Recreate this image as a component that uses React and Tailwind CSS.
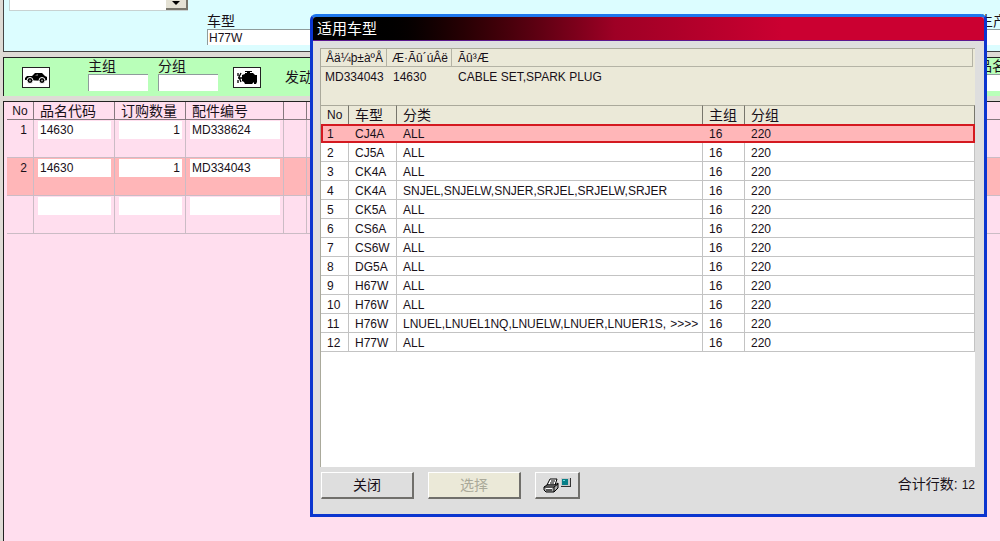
import React from 'react'

const orders = [
  { no: 1, code: '14630', qty: '1', part: 'MD338624' },
  { no: 2, code: '14630', qty: '1', part: 'MD334043', active: true },
  { no: '', code: '', qty: '', part: '' },
]

const models = [
  ['CJ4A', 'ALL'],
  ['CJ5A', 'ALL'],
  ['CK4A', 'ALL'],
  ['CK4A', 'SNJEL,SNJELW,SNJER,SRJEL,SRJELW,SRJER'],
  ['CK5A', 'ALL'],
  ['CS6A', 'ALL'],
  ['CS6W', 'ALL'],
  ['DG5A', 'ALL'],
  ['H67W', 'ALL'],
  ['H76W', 'ALL'],
  ['H76W', 'LNUEL,LNUEL1NQ,LNUELW,LNUER,LNUER1S,', '>>>>'],
  ['H77W', 'ALL'],
]

function CarIcon() {
  return (
    <svg className="w-6 h-3 shrink-0" viewBox="0 0 24 12" aria-hidden="true">
      <path d="M1 6 L3 4 L8 4 L11 1 L18 1 L21 4 L23 5 L23 8 L21 9 L1 8 Z" fill="#000" />
      <path d="M11 4 L13 2 L14 2 L14 4 Z" fill="#555" />
      <circle cx="6" cy="8.500" r="3" fill="#000" stroke="#fff" />
      <circle cx="18" cy="8.500" r="3" fill="#000" stroke="#fff" />
      <circle cx="6" cy="8.500" r="1" fill="#999" />
      <circle cx="18" cy="8.500" r="1" fill="#999" />
    </svg>
  )
}

function EngineIcon() {
  return (
    <svg className="w-5 h-4 shrink-0" viewBox="0 0 20 16" aria-hidden="true">
      <path d="M5 5 L8 4 L8 3 L10 3 L10 2 L8 2 L8 1 L15 1 L15 2 L13 2 L13 3 L16 3 L18 5 L20 5 L20 12 L19 14 L17 14 L17 12 L15 14 L8 14 L7 12 L5 11 Z" fill="#000" />
      <path d="M1 3 V6 M1 10 V13 M4 3 L2 7 L4 12 M1 8 H5" stroke="#000" strokeWidth="1.300" fill="none" />
    </svg>
  )
}

function PrinterIcon() {
  return (
    <svg className="w-7 h-4 shrink-0" viewBox="0 0 28 16" aria-hidden="true">
      <path d="M4 8 L7 2 L14 2 L12 8 Z" fill="#fff" stroke="#000" />
      <path d="M8 4 H12 M7 6 H11" stroke="#000" />
      <path d="M1 10 L4 8 L12 8 L15 6 L15 11 L11 15 L3 15 L1 13 Z" fill="#aaa" stroke="#000" />
      <path d="M1 10 H11 L15 7 M11 10 V15 M3 13 H9" stroke="#000" fill="none" />
      <path d="M3 11.500 H9" stroke="#fff" />
      <path d="M18 1 H28 V10 H18 Z" fill="#333" />
      <path d="M18 1 H27 V9 H18 Z" fill="#c8c8c8" />
      <path d="M19 2 H25 V8 H19 Z" fill="#087f88" />
      <path d="M20 3 H22 V4 H20 Z" fill="#6dd" />
    </svg>
  )
}

function Field({ label, id, value = '', className = '', inputClass }) {
  return (
    <div className={`flex flex-col ${className}`}>
      <label htmlFor={id} className="text-sm leading-4 whitespace-nowrap">{label}</label>
      <input
        id={id}
        defaultValue={value}
        className={`w-full min-w-0 bg-white border-t border-l border-[#8f9b9b] text-xs px-px ${inputClass}`}
      />
    </div>
  )
}

function SearchPanel() {
  return (
    <section className="h-[52px] shrink-0 bg-[#dcfdff] border-l border-b border-[#444] overflow-hidden">
      <div className="flex h-[13px] pl-[5px]">
        <div className="flex w-[179px] h-[11px] bg-white border-l border-b border-[#c8d2d2]">
          <input aria-label="目录" className="flex-1 min-w-0 h-[10px]" />
          <button aria-label="展开" className="w-[22px] bg-[#e4e1d4] border-r-2 border-b-2 border-[#77756b] flex justify-center">
            <svg className="w-2 h-1 mt-px" viewBox="0 0 8 4" aria-hidden="true"><path d="M0 0 H8 L4 4 Z" fill="#000" /></svg>
          </button>
        </div>
      </div>
      <div className="grid grid-cols-[155px_215px_132px_135px_135px_1fr] pl-[203px]">
        <Field id="model" label="车型" value="H77W" inputClass="h-4" />
        <Field id="kind" label="分类" inputClass="h-4" />
        <Field id="outer" label="外饰" inputClass="h-4" />
        <Field id="inner" label="内饰" inputClass="h-4" />
        <Field id="option" label="选装" inputClass="h-4" />
        <Field id="made" label="生产日期" className="overflow-hidden" inputClass="h-4" />
      </div>
    </section>
  )
}

function GroupPanel() {
  return (
    <section className="h-[39px] shrink-0 mt-[5px] bg-[#b9ffb9] border-t border-l border-[#222] flex overflow-hidden">
      <button aria-label="车型图" className="ml-[18px] mt-[9px] w-7 h-[21px] bg-white border border-[#222] flex items-center justify-center">
        <CarIcon />
      </button>
      <Field id="main" label="主组" className="ml-[38px] w-[60px]" inputClass="h-[17px]" />
      <Field id="sub" label="分组" className="ml-[10px] w-[60px]" inputClass="h-[17px]" />
      <button aria-label="发动机图" className="ml-[15px] mt-[9px] w-7 h-[21px] bg-white border border-[#222] flex items-center justify-center">
        <EngineIcon />
      </button>
      <span className="ml-6 mt-[9px] text-sm leading-5 whitespace-nowrap">发动机</span>
      <div className="flex-1" />
      <Field id="name" label="品名" className="w-[22px]" inputClass="h-[17px]" />
    </section>
  )
}

function OrderTable() {
  return (
    <section className="flex-1 mt-[5px] pl-[3px] bg-[#ffdeee] border-t border-l border-[#222] overflow-hidden">
      <table className="w-full table-fixed border-separate border-spacing-0 text-xs">
        <colgroup>
          <col className="w-[27px]" />
          <col className="w-[81px]" />
          <col className="w-[71px]" />
          <col className="w-[98px]" />
          <col className="w-[23px]" />
          <col />
        </colgroup>
        <thead>
          <tr className="h-[18px] text-left whitespace-nowrap">
            {['No', '品名代码', '订购数量', '配件编号', '', ''].map((h, i) => (
              <th
                key={i}
                className={`p-0 font-normal leading-4 border-b border-[#85787e] ${i < 5 ? 'border-r' : ''} ${i === 0 ? 'text-center text-xs' : 'pl-[6px] text-sm'}`}
              >
                {h}
              </th>
            ))}
          </tr>
        </thead>
        <tbody>
          {orders.map((o, i) => (
            <tr key={i} className={`h-[38px] align-top ${o.active ? 'bg-[#ffb6b8]' : ''}`}>
              <td className="p-0 pr-[6px] pt-[2px] text-right leading-[17px] border-r border-b border-[#cbbcc5]">{o.no}</td>
              {[o.code, o.qty, o.part].map((v, j) => (
                <td key={j} className="p-0 pl-[4px] pr-[3px] border-r border-b border-[#cbbcc5]">
                  <input
                    aria-label={`${['品名代码', '订购数量', '配件编号'][j]} ${i + 1}`}
                    defaultValue={v}
                    className={`block w-full h-[18px] bg-white px-[2px] mt-px ${j === 1 ? 'text-right' : ''}`}
                  />
                </td>
              ))}
              <td className="border-r border-b border-[#cbbcc5]" />
              <td className="border-b border-[#cbbcc5]" />
            </tr>
          ))}
        </tbody>
      </table>
    </section>
  )
}

function PartTable() {
  return (
    <div className="h-[57px] pr-[2px] bg-[#ebe9d8] border-t border-l border-[#aaa99b]">
      <table className="w-full table-fixed border-separate border-spacing-0 text-xs text-left whitespace-nowrap">
        <colgroup>
          <col className="w-[66px]" />
          <col className="w-[65px]" />
          <col />
        </colgroup>
        <thead>
          <tr className="h-[18px]">
            <th className="p-0 pl-[5px] font-normal border-r border-b border-[#b4b3a5]">Åä¼þ±àºÅ</th>
            <th className="p-0 pl-[5px] font-normal border-r border-b border-[#b4b3a5]">Æ·Ãû´úÂë</th>
            <th className="p-0 pl-[6px] font-normal border-r border-b border-[#b4b3a5]">Ãû³Æ</th>
          </tr>
        </thead>
        <tbody>
          <tr className="h-5">
            <td className="p-0 pl-1">MD334043</td>
            <td className="p-0 pl-[6px]">14630</td>
            <td className="p-0 pl-[6px]">CABLE SET,SPARK PLUG</td>
          </tr>
        </tbody>
      </table>
    </div>
  )
}

function ModelTable() {
  return (
    <div className="flex-1 bg-white border-l border-[#aaa99b]">
      <table className="w-full table-fixed border-separate border-spacing-0 text-xs text-left whitespace-nowrap">
        <colgroup>
          <col className="w-[28px]" />
          <col className="w-12" />
          <col className="w-[306px]" />
          <col className="w-[42px]" />
          <col />
        </colgroup>
        <thead>
          <tr className="h-[19px] bg-[#ebe9d8]">
            {['No', '车型', '分类', '主组', '分组'].map((h) => (
              <th
                key={h}
                className={`p-0 pl-[6px] font-normal leading-4 border-r border-t border-r-[#77766c] border-t-[#aaa99b] ${h === 'No' ? 'text-xs' : 'text-sm'}`}
              >
                {h}
              </th>
            ))}
          </tr>
        </thead>
        <tbody>
          {models.map(([model, kind, more], i) => {
            const cell = `p-0 pt-[2px] pl-[6px] border-b border-r ${i === 0 ? 'border-[#ffb6b8]' : 'border-[#c3c3c3]'}`
            return (
              <tr key={i} className={`h-[19px] ${i === 0 ? 'bg-[#ffb6b8] outline-2 -outline-offset-2 outline-[#d41920]' : ''}`}>
                <td className={cell}>{i + 1}</td>
                <td className={cell}>{model}</td>
                <td className={cell}>
                  {kind}
                  {more && <span className="ml-1">{more}</span>}
                </td>
                <td className={cell}>16</td>
                <td className={cell}>220</td>
              </tr>
            )
          })}
        </tbody>
      </table>
    </div>
  )
}

const button = 'h-[27px] border-t border-l border-r-2 border-b-2 border-t-white border-l-white border-r-[#706f6b] border-b-[#706f6b] text-sm leading-5'

function ModelDialog() {
  return (
    <div
      role="dialog"
      aria-labelledby="dialog-title"
      className="absolute left-[31%] right-[13px] top-[14px] bottom-6 flex flex-col rounded-t-md border-3 border-[#0b35cf] border-t-[#1e78ee] bg-[#dedede] overflow-hidden"
    >
      <h1
        id="dialog-title"
        className="h-6 shrink-0 pl-1 text-[15px] leading-[23px] text-white border-b border-[#5b168f] bg-linear-to-r from-black from-8% via-[#9e0025] via-45% to-[#cb0031] to-70%"
      >
        适用车型
      </h1>
      <div className="flex-1 min-h-0 flex flex-col pt-[7px] pl-[7px] pr-[9px]">
        <PartTable />
        <ModelTable />
        <div className="h-[47px] shrink-0 flex items-start pt-[5px] pl-px">
          <button className={`${button} w-[93px] bg-[#dedede]`}>关闭</button>
          <button disabled className={`${button} w-[93px] ml-[14px] bg-[#ebe9d8] text-[#aaa99a]`}>选择</button>
          <button aria-label="打印" className={`${button} w-[45px] ml-[14px] bg-[#dedede] flex items-center justify-center`}>
            <PrinterIcon />
          </button>
          <span className="ml-auto text-sm leading-6">
            合计行数: <span className="text-xs">12</span>
          </span>
        </div>
      </div>
    </div>
  )
}

export default function App() {
  return (
    <div className="relative h-screen flex flex-col pl-[3px] bg-[#dedbd5] text-[#181018] font-['Liberation_Sans','Noto_Sans_CJK_SC',sans-serif] overflow-hidden">
      <SearchPanel />
      <GroupPanel />
      <OrderTable />
      <ModelDialog />
    </div>
  )
}
